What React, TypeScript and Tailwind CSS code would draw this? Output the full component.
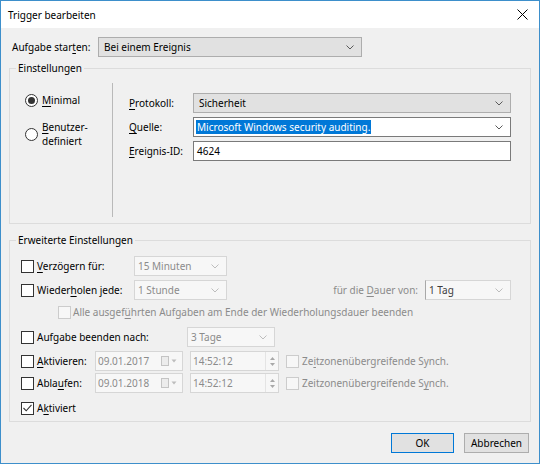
import React from 'react';

// small "v" used by every combobox
function Chevron({ className = '' }: { className?: string }) {
    return (
        <svg width="8" height="5" viewBox="0 0 8 5" className={className}>
            <polyline points="0.5,0.5 4,4 7.5,0.5" fill="none" stroke="currentColor" strokeWidth="1" />
        </svg>
    );
}

type ComboKind = 'button' | 'edit' | 'disabled';

interface ComboProps {
    value: React.ReactNode;
    kind?: ComboKind;
    className?: string;
}

function Combo({ value, kind = 'button', className = '' }: ComboProps) {
    const look =
        kind === 'button'
            ? 'bg-[#e1e1e1] border-[#adadad] text-black pl-[5px]'
            : kind === 'edit'
                ? 'bg-white border-[#7a7a7a] text-black pl-[2px]'
                : 'bg-[#f7f7f7] border-[#d6d6d6] text-[#8b8b8b] pl-[3px]';
    return (
        <div className={`flex h-[20px] items-center border pr-[7px] ${look} ${className}`}>
            <span className="flex-1 truncate">{value}</span>
            <Chevron className={kind === 'disabled' ? 'text-[#bdbdbd]' : 'text-[#5a5a5a]'} />
        </div>
    );
}

function Checkbox({ checked = false, disabled = false }: { checked?: boolean; disabled?: boolean }) {
    return (
        <span
            className={`flex h-[13px] w-[13px] shrink-0 items-center justify-center border ${
                disabled ? 'border-[#cccccc] bg-[#f7f7f7]' : 'border-[#333333] bg-white'
            }`}
        >
            {checked && (
                <svg width="9" height="8" viewBox="0 0 9 8">
                    <polyline points="0.5,4 3.2,6.8 8.5,0.8" fill="none" stroke="#333333" strokeWidth="1.1" />
                </svg>
            )}
        </span>
    );
}

function Radio({ checked = false }: { checked?: boolean }) {
    return (
        <span className="flex h-[13px] w-[13px] shrink-0 items-center justify-center rounded-full border border-[#333333] bg-white">
            {checked && <span className="h-[7px] w-[7px] rounded-full bg-[#333333]" />}
        </span>
    );
}

function U({ children }: { children: React.ReactNode }) {
    return <span className="underline underline-offset-[2px]">{children}</span>;
}

function CheckRow({ label, checked = false, className = '' }: { label: React.ReactNode; checked?: boolean; className?: string }) {
    return (
        <div className={`flex shrink-0 items-center gap-[3px] ${className}`}>
            <Checkbox checked={checked} />
            <span>{label}</span>
        </div>
    );
}

function DateBox({ value }: { value: string }) {
    return (
        <div className="flex h-[20px] w-[88px] items-center border border-[#d6d6d6] bg-[#f7f7f7] pl-[2px] pr-[5px] text-[#8b8b8b]">
            <span className="flex-1">{value}</span>
            <svg width="16" height="10" viewBox="0 0 16 10">
                <rect x="0.5" y="0.5" width="7" height="9" fill="#ececec" stroke="#c4c4c4" />
                <polygon points="10.5,3.5 15.5,3.5 13,6.5" fill="#bdbdbd" />
            </svg>
        </div>
    );
}

function TimeBox({ value }: { value: string }) {
    return (
        <div className="flex h-[20px] w-[89px] items-center border border-[#d6d6d6] bg-[#f7f7f7] pl-[2px] text-[#8b8b8b]">
            <span className="flex-1">{value}</span>
            <div className="flex h-full w-[13px] flex-col items-center justify-center gap-[3px] border-l border-[#e4e4e4]">
                <svg width="5" height="3" viewBox="0 0 5 3">
                    <polygon points="0,3 5,3 2.5,0" fill="#a8a8a8" />
                </svg>
                <svg width="5" height="3" viewBox="0 0 5 3">
                    <polygon points="0,0 5,0 2.5,3" fill="#a8a8a8" />
                </svg>
            </div>
        </div>
    );
}

function SyncBox({ label }: { label: React.ReactNode }) {
    return (
        <div className="ml-[7px] flex items-center gap-[3px] text-[#8b8b8b]">
            <Checkbox disabled />
            <span>{label}</span>
        </div>
    );
}

export default function App() {
    return (
        <div className="flex h-[464px] w-[540px] flex-col whitespace-nowrap border border-[#3d8fcb] bg-[#f0f0f0] font-['Noto_Sans',sans-serif] text-[10px] leading-[14px] text-black">
            {/* Title bar */}
            <div className="flex h-[27px] shrink-0 items-center justify-between bg-white pl-[7px] pr-[11px]">
                <span className="text-[10px]">Trigger bearbeiten</span>
                <svg width="11" height="11" viewBox="0 0 11 11">
                    <path d="M0.5 0.5L10.5 10.5M10.5 0.5L0.5 10.5" stroke="#000" strokeWidth="1" />
                </svg>
            </div>

            <div className="flex flex-1 flex-col px-[8px] pt-[9px]">
                {/* Aufgabe starten */}
                <div className="flex h-[20px] items-center">
                    <span className="ml-[3px] w-[86px]">
                        Aufgabe star<U>t</U>en:
                    </span>
                    <Combo value="Bei einem Ereignis" className="w-[264px]" />
                </div>

                {/* Einstellungen */}
                <fieldset className="mt-[3px] w-[522px] border border-[#dcdcdc]">
                    <legend className="ml-[6px] px-[2px] leading-[16px]">Einstellungen</legend>
                    <div className="flex pb-[6px] pt-[7px]">
                        <div className="flex w-[102px] flex-col pl-[15px]">
                            <div className="mt-[9px] flex h-[16px] items-center gap-[4px]">
                                <Radio checked />
                                <span>
                                    <U>M</U>inimal
                                </span>
                            </div>
                            <div className="mt-[12px] flex items-center gap-[4px]">
                                <Radio />
                                <span>
                                    <U>B</U>enutzer-
                                    <br />
                                    definiert
                                </span>
                            </div>
                        </div>
                        <div className="h-[134px] w-px bg-[#b9b9b9]" />
                        <div className="flex flex-col gap-[4px] pl-[16px] pt-[10px]">
                            <div className="flex h-[20px] items-center">
                                <span className="w-[64px]">
                                    <U>P</U>rotokoll:
                                </span>
                                <Combo value="Sicherheit" className="w-[318px]" />
                            </div>
                            <div className="flex h-[20px] items-center">
                                <span className="w-[64px]">
                                    <U>Q</U>uelle:
                                </span>
                                <Combo
                                    kind="edit"
                                    className="w-[318px]"
                                    value={<span className="bg-[#0078d7] px-[1px] py-[2px] text-white">Microsoft Windows security auditing.</span>}
                                />
                            </div>
                            <div className="flex h-[20px] items-center">
                                <span className="w-[64px]">
                                    <U>E</U>reignis-ID:
                                </span>
                                <div className="flex h-[20px] w-[318px] items-center border border-[#7a7a7a] bg-white pl-[3px]">4624</div>
                            </div>
                        </div>
                    </div>
                </fieldset>

                {/* Erweiterte Einstellungen */}
                <fieldset className="mt-[8px] w-[522px] border border-[#dcdcdc]">
                    <legend className="ml-[6px] px-[2px] leading-[16px]">Erweiterte Einstellungen</legend>
                    <div className="flex flex-col pb-[3px] pl-[11px] pr-[19px]">
                        <div className="mt-[8px] flex h-[20px] items-center">
                            <CheckRow className="w-[113px]" label={<><U>V</U>erzögern für:</>} />
                            <Combo kind="disabled" value="15 Minuten" className="w-[93px]" />
                        </div>
                        <div className="mt-[4px] flex h-[20px] items-center">
                            <CheckRow className="w-[113px]" label={<>Wieder<U>h</U>olen jede:</>} />
                            <Combo kind="disabled" value="1 Stunde" className="w-[93px]" />
                            <span className="ml-auto mr-[7px] text-[#8b8b8b]">
                                für die <U>D</U>auer von:
                            </span>
                            <Combo kind="disabled" value={<span className="text-[#3c3c3c]">1 Tag</span>} className="w-[86px] border-l-[#a8a8a8]" />
                        </div>
                        <div className="ml-[37px] mt-[2px] flex h-[20px] items-center gap-[2px] text-[#8b8b8b]">
                            <Checkbox disabled />
                            <span>
                                Alle ausgef<U>ü</U>hrten Aufgaben am Ende der Wiederholungsdauer beenden
                            </span>
                        </div>
                        <div className="mt-[5px] flex h-[20px] items-center">
                            <CheckRow className="w-[166px]" label="Aufgabe beenden nach:" />
                            <Combo kind="disabled" value="3 Tage" className="w-[88px]" />
                        </div>
                        <div className="mt-[4px] flex h-[20px] items-center">
                            <CheckRow className="w-[74px]" label={<><U>A</U>ktivieren:</>} />
                            <DateBox value="09.01.2017" />
                            <div className="ml-[7px]">
                                <TimeBox value="14:52:12" />
                            </div>
                            <SyncBox label={<>Ze<U>i</U>tzonenübergreifende Synch.</>} />
                        </div>
                        <div className="mt-[2px] flex h-[20px] items-center">
                            <CheckRow className="w-[74px]" label={<>Abla<U>u</U>fen:</>} />
                            <DateBox value="09.01.2018" />
                            <div className="ml-[7px]">
                                <TimeBox value="14:52:12" />
                            </div>
                            <SyncBox label={<>Zeitzonenübergreifende S<U>y</U>nch.</>} />
                        </div>
                        <div className="mt-[5px] flex h-[20px] items-center">
                            <CheckRow checked label={<>A<U>k</U>tiviert</>} />
                        </div>
                    </div>
                </fieldset>

                {/* Buttons */}
                <div className="mt-[11px] flex justify-end gap-[10px] pr-[2px]">
                    <button className="h-[20px] w-[63px] border border-[#0078d7] bg-[#e1e1e1]">OK</button>
                    <button className="h-[20px] w-[65px] border border-[#adadad] bg-[#e1e1e1]">Abbrechen</button>
                </div>
            </div>
        </div>
    );
}
